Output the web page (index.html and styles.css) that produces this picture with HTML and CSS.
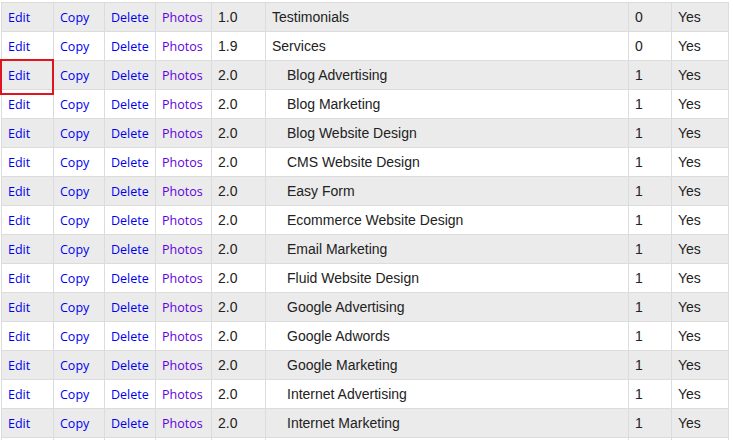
FILE: index.html
```html
<!DOCTYPE html>
<html lang="en">
<head>
  <meta charset="UTF-8" />
  <title>Pages</title>
  <link rel="stylesheet" href="styles.css">
</head>
<body>
  <div class="page-list">
    <table class="pages">
      <tbody>
        <tr><td><a href="#">Edit</a></td><td><a href="#">Copy</a></td><td><a href="#">Delete</a></td><td><a class="photos" href="#">Photos</a></td><td>1.0</td><td>Testimonials</td><td>0</td><td>Yes</td></tr>
        <tr><td><a href="#">Edit</a></td><td><a href="#">Copy</a></td><td><a href="#">Delete</a></td><td><a class="photos" href="#">Photos</a></td><td>1.9</td><td>Services</td><td>0</td><td>Yes</td></tr>
        <tr><td class="selected"><a href="#">Edit</a></td><td><a href="#">Copy</a></td><td><a href="#">Delete</a></td><td><a class="photos" href="#">Photos</a></td><td>2.0</td><td class="sub">Blog Advertising</td><td>1</td><td>Yes</td></tr>
        <tr><td><a href="#">Edit</a></td><td><a href="#">Copy</a></td><td><a href="#">Delete</a></td><td><a class="photos" href="#">Photos</a></td><td>2.0</td><td class="sub">Blog Marketing</td><td>1</td><td>Yes</td></tr>
        <tr><td><a href="#">Edit</a></td><td><a href="#">Copy</a></td><td><a href="#">Delete</a></td><td><a class="photos" href="#">Photos</a></td><td>2.0</td><td class="sub">Blog Website Design</td><td>1</td><td>Yes</td></tr>
        <tr><td><a href="#">Edit</a></td><td><a href="#">Copy</a></td><td><a href="#">Delete</a></td><td><a class="photos" href="#">Photos</a></td><td>2.0</td><td class="sub">CMS Website Design</td><td>1</td><td>Yes</td></tr>
        <tr><td><a href="#">Edit</a></td><td><a href="#">Copy</a></td><td><a href="#">Delete</a></td><td><a class="photos" href="#">Photos</a></td><td>2.0</td><td class="sub">Easy Form</td><td>1</td><td>Yes</td></tr>
        <tr><td><a href="#">Edit</a></td><td><a href="#">Copy</a></td><td><a href="#">Delete</a></td><td><a class="photos" href="#">Photos</a></td><td>2.0</td><td class="sub">Ecommerce Website Design</td><td>1</td><td>Yes</td></tr>
        <tr><td><a href="#">Edit</a></td><td><a href="#">Copy</a></td><td><a href="#">Delete</a></td><td><a class="photos" href="#">Photos</a></td><td>2.0</td><td class="sub">Email Marketing</td><td>1</td><td>Yes</td></tr>
        <tr><td><a href="#">Edit</a></td><td><a href="#">Copy</a></td><td><a href="#">Delete</a></td><td><a class="photos" href="#">Photos</a></td><td>2.0</td><td class="sub">Fluid Website Design</td><td>1</td><td>Yes</td></tr>
        <tr><td><a href="#">Edit</a></td><td><a href="#">Copy</a></td><td><a href="#">Delete</a></td><td><a class="photos" href="#">Photos</a></td><td>2.0</td><td class="sub">Google Advertising</td><td>1</td><td>Yes</td></tr>
        <tr><td><a href="#">Edit</a></td><td><a href="#">Copy</a></td><td><a href="#">Delete</a></td><td><a class="photos" href="#">Photos</a></td><td>2.0</td><td class="sub">Google Adwords</td><td>1</td><td>Yes</td></tr>
        <tr><td><a href="#">Edit</a></td><td><a href="#">Copy</a></td><td><a href="#">Delete</a></td><td><a class="photos" href="#">Photos</a></td><td>2.0</td><td class="sub">Google Marketing</td><td>1</td><td>Yes</td></tr>
        <tr><td><a href="#">Edit</a></td><td><a href="#">Copy</a></td><td><a href="#">Delete</a></td><td><a class="photos" href="#">Photos</a></td><td>2.0</td><td class="sub">Internet Advertising</td><td>1</td><td>Yes</td></tr>
        <tr><td><a href="#">Edit</a></td><td><a href="#">Copy</a></td><td><a href="#">Delete</a></td><td><a class="photos" href="#">Photos</a></td><td>2.0</td><td class="sub">Internet Marketing</td><td>1</td><td>Yes</td></tr>
        <tr><td></td><td></td><td></td><td></td><td></td><td></td><td></td><td></td></tr>
      </tbody>
    </table>
  </div>
</body>
</html>
```

FILE: styles.css
```css
* {
  box-sizing: border-box;
}
body {
  margin: 0;
  padding: 0;
  background: #fff;
  font-family: "Liberation Sans", Arial, sans-serif;
  color: #222;
  overflow: hidden;
}
.page-list {
  padding: 2px 0 0 1px;
}
.pages {
  border-collapse: collapse;
  width: 728px;
  table-layout: fixed;
  font-size: 14px;
}
.pages td {
  height: 29px;
  padding: 0 6px;
  border: 1px solid #dcdcdc;
  white-space: nowrap;
  vertical-align: middle;
}
.pages tr:nth-child(odd) td {
  background: #ebebeb;
}
.pages td:nth-child(1) { width: 52px; }
.pages td:nth-child(2) { width: 51px; }
.pages td:nth-child(3) { width: 51px; }
.pages td:nth-child(4) { width: 56px; }
.pages td:nth-child(5) { width: 54px; }
.pages td:nth-child(6) { width: 363px; }
.pages td:nth-child(7) { width: 43px; }
.pages td:nth-child(8) { width: 57px; }
.pages a {
  font-family: "Open Sans", "DejaVu Sans", sans-serif;
  font-size: 12.5px;
  color: #0000ee;
  text-decoration: none;
}
.pages a.photos {
  color: #5e00e0;
}
.pages td.sub {
  padding-left: 21px;
}
.pages td.selected {
  position: relative;
}
.pages td.selected::after {
  content: "";
  position: absolute;
  left: -2px;
  top: -2px;
  width: 50px;
  height: 32px;
  border: 2px solid #e0141e;
}
```
